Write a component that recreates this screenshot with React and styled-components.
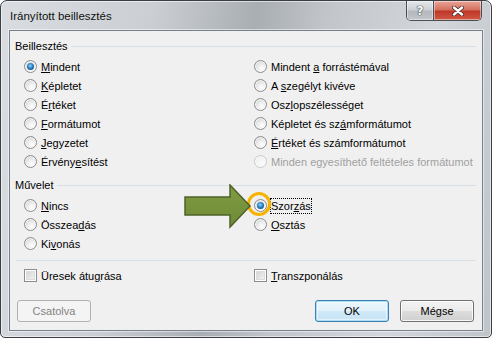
import React from 'react'
import styled, { createGlobalStyle } from 'styled-components'

const GlobalStyle = createGlobalStyle`
  body {
    margin: 0;
    background: #ffffff;
    font-family: "Liberation Sans", Arial, sans-serif;
  }
`

const Window = styled.div`
  width: 492px;
  height: 338px;
  box-sizing: border-box;
  border: 1px solid #3b3f44;
  border-radius: 7px 7px 5px 5px;
  background: linear-gradient(100deg, #d9dde1 0%, #cbcfd3 28%, #a9aeb3 47%, #c2c6ca 60%, #d3d7db 80%, #bfc4c9 100%);
  box-shadow: inset 0 0 0 1px rgba(255, 255, 255, 0.55);
  display: flex;
  flex-direction: column;
  padding: 0 8px 6px 8px;
  overflow: hidden;
`

const TitleBar = styled.div`
  height: 29px;
  display: flex;
  align-items: flex-start;
`

const Title = styled.div`
  margin: 7px 0 0 1px;
  font-size: 11.5px;
  line-height: 16px;
  color: #111;
`

const CaptionButtons = styled.div`
  margin-left: auto;
  margin-right: 1px;
  display: flex;
  height: 19px;
  border: 1px solid #4a4f55;
  border-top: none;
  border-radius: 0 0 5px 5px;
  overflow: hidden;
`

const CaptionButton = styled.div`
  width: ${p => p.$w}px;
  display: flex;
  align-items: center;
  justify-content: center;
  box-shadow: inset 0 0 0 1px rgba(255, 255, 255, 0.45);
  background: ${p => p.$close
    ? 'linear-gradient(#e9a698 0%, #d4715f 45%, #c0372a 55%, #cf5a44 100%)'
    : 'linear-gradient(#e4e7ea 0%, #cdd1d5 45%, #b3b8bd 55%, #c3c7cb 100%)'};
  & + & {
    border-left: 1px solid #4a4f55;
  }
`

const HelpGlyph = styled.span`
  font-family: "DejaVu Sans", sans-serif;
  font-weight: bold;
  font-size: 12px;
  color: #fff;
  text-shadow: 0 0 1px #3c4147, 0 0 1px #3c4147, 0 0 1px #3c4147;
`

const Client = styled.div`
  position: relative;
  flex: 1;
  background: #f0f0f0;
  border: 1px solid #76818d;
  box-shadow: 0 0 0 1px rgba(255, 255, 255, 0.5);
  display: flex;
  flex-direction: column;
  padding: 0 6px 0 5px;
  font-size: 11px;
  color: #000;
`

const GroupHeader = styled.div`
  height: 16px;
  margin-top: ${p => p.$top}px;
  display: flex;
  align-items: center;
  gap: 3px;
  line-height: 16px;
`

const GroupLine = styled.div`
  flex: 1;
  height: 1px;
  background: #d5dfe5;
`

const Separator = styled.div`
  height: 1px;
  margin: 7px 0 0 1px;
  background: #d5dfe5;
`

const OptionGrid = styled.div`
  display: grid;
  grid-template-columns: 230px 1fr;
  grid-template-rows: repeat(${p => p.$rows}, 19px);
  grid-auto-flow: column;
  margin: ${p => p.$top}px 0 0 9px;
`

const Option = styled.label`
  display: flex;
  align-items: center;
  gap: 4px;
  color: ${p => p.$disabled ? '#a0a0a0' : '#000'};
  white-space: nowrap;
`

const Radio = styled.span`
  position: relative;
  width: 13px;
  height: 13px;
  box-sizing: border-box;
  border-radius: 50%;
  border: 1px solid ${p => p.$disabled ? '#c9c9c9' : '#8b8c8d'};
  background: ${p => p.$disabled
    ? 'radial-gradient(circle at 60% 65%, #fafafa 0%, #f1f1f1 60%, #e6e6e6 100%)'
    : 'radial-gradient(circle at 62% 68%, #ffffff 0%, #eaeaea 45%, #cfcfcf 85%, #c4c4c4 100%)'};
  box-shadow: inset 0 0 0 1px rgba(255, 255, 255, 0.7);
  flex: none;

  &::after {
    content: '';
    display: ${p => p.$checked ? 'block' : 'none'};
    position: absolute;
    left: 2px;
    top: 2px;
    width: 7px;
    height: 7px;
    border-radius: 50%;
    background: radial-gradient(circle at 45% 40%, #9fd8f6 0%, #3a94d4 35%, #155a9c 70%, #0d3466 100%);
  }

  &::before {
    content: '';
    display: ${p => p.$ring ? 'block' : 'none'};
    position: absolute;
    left: -8px;
    top: -8px;
    width: 24px;
    height: 24px;
    box-sizing: border-box;
    border-radius: 50%;
    border: 3.5px solid #f6b400;
  }
`

const Checkbox = styled.span`
  width: 13px;
  height: 13px;
  box-sizing: border-box;
  border: 1px solid #8b8c8d;
  background: linear-gradient(135deg, #cbcbcb 0%, #e3e3e3 50%, #f7f7f7 100%);
  box-shadow: inset 0 0 0 1px #ffffff, inset 0 0 0 2px #dcdcdc;
  flex: none;
`

const Text = styled.span`
  line-height: 14px;
  border: 1px dotted ${p => p.$focused ? '#000' : 'transparent'};
  margin: 0 -1px;
  padding: 0;

  u {
    text-decoration: underline;
    text-underline-offset: 1px;
  }
`

const CheckGrid = styled.div`
  display: grid;
  grid-template-columns: 230px 1fr;
  height: 19px;
  margin: 5px 0 0 9px;
`

const ButtonRow = styled.div`
  display: flex;
  gap: 11px;
  margin: 15px 2px 0 2px;
`

const Button = styled.div`
  width: 74px;
  height: 22px;
  box-sizing: border-box;
  border-radius: 3px;
  display: flex;
  align-items: center;
  justify-content: center;
  border: 1px solid ${p => p.$disabled ? '#adb2b5' : p.$default ? '#3c7fb1' : '#707070'};
  color: ${p => p.$disabled ? '#838383' : '#000'};
  background: ${p => p.$disabled
    ? '#f4f4f4'
    : p.$default
      ? 'linear-gradient(#eaf6fd 0%, #e2f1fa 50%, #d1eaf8 50%, #c5e3f5 100%)'
      : 'linear-gradient(#f2f2f2 0%, #ebebeb 50%, #dddddd 50%, #cfcfcf 100%)'};
  box-shadow: ${p => p.$disabled
    ? 'none'
    : p.$default
      ? 'inset 0 0 0 1px #a8dcf7, inset 0 0 0 2px rgba(255,255,255,0.5)'
      : 'inset 0 0 0 1px rgba(255,255,255,0.85)'};
  ${p => p.$first ? 'margin-right: auto;' : ''}
`

const Arrow = styled.svg`
  position: absolute;
  left: 165px;
  top: 153px;
`

const accel = (text) => {
  const i = text.indexOf('&')
  if (i < 0) return text
  return (
    <>
      {text.slice(0, i)}
      <u>{text[i + 1]}</u>
      {text.slice(i + 2)}
    </>
  )
}

const pasteOptions = [
  { text: '&Mindent', checked: true },
  { text: '&Képletet' },
  { text: 'É&rtéket' },
  { text: '&Formátumot' },
  { text: '&Jegyzetet' },
  { text: 'Érvény&esítést' },
  { text: 'Mindent &a forrástémával' },
  { text: 'A &szegélyt kivéve' },
  { text: 'Osz&lopszélességet' },
  { text: 'Képletet és sz&ámformátumot' },
  { text: '&Értéket és számformátumot' },
  { text: 'Minden egyesíthető feltételes formátumot', disabled: true },
]

const opOptions = [
  { text: '&Nincs' },
  { text: 'Összea&dás' },
  { text: 'Ki&vonás' },
  { text: 'Szor&zás', checked: true, focused: true, ring: true },
  { text: '&Osztás' },
  { text: '', empty: true },
]

const RadioOption = ({ opt }) =>
  opt.empty ? <span /> : (
    <Option $disabled={opt.disabled}>
      <Radio $checked={opt.checked} $disabled={opt.disabled} $ring={opt.ring} />
      <Text $focused={opt.focused}>{accel(opt.text)}</Text>
    </Option>
  )

export default function App() {
  return (
    <>
      <GlobalStyle />
      <Window>
        <TitleBar>
          <Title>Irányított beillesztés</Title>
          <CaptionButtons>
            <CaptionButton $w={26}>
              <HelpGlyph>?</HelpGlyph>
            </CaptionButton>
            <CaptionButton $w={47} $close>
              <svg width="12" height="10" viewBox="0 0 12 10">
                <path d="M2 1.5 L10 8.5 M10 1.5 L2 8.5" stroke="#4a2a26" strokeWidth="4" strokeLinecap="round" />
                <path d="M2 1.5 L10 8.5 M10 1.5 L2 8.5" stroke="#ffffff" strokeWidth="2.4" strokeLinecap="round" />
              </svg>
            </CaptionButton>
          </CaptionButtons>
        </TitleBar>
        <Client>
          <GroupHeader $top={7}>
            <span>Beillesztés</span>
            <GroupLine />
          </GroupHeader>
          <OptionGrid $rows={6} $top={3}>
            {pasteOptions.map((o, i) => <RadioOption key={i} opt={o} />)}
          </OptionGrid>
          <GroupHeader $top={6}>
            <span>Művelet</span>
            <GroupLine />
          </GroupHeader>
          <OptionGrid $rows={3} $top={3}>
            {opOptions.map((o, i) => <RadioOption key={i} opt={o} />)}
          </OptionGrid>
          <Separator />
          <CheckGrid>
            <Option>
              <Checkbox />
              <Text>{accel('Üresek átu&grása')}</Text>
            </Option>
            <Option>
              <Checkbox />
              <Text>{accel('&Transzponálás')}</Text>
            </Option>
          </CheckGrid>
          <ButtonRow>
            <Button $disabled $first>Csatolva</Button>
            <Button $default>OK</Button>
            <Button>Mégse</Button>
          </ButtonRow>
          <Arrow width="80" height="48" viewBox="0 0 80 48">
            <defs>
              <linearGradient id="arrowFill" x1="0" y1="0" x2="0" y2="1">
                <stop offset="0" stopColor="#7f9c42" />
                <stop offset="1" stopColor="#6f8b36" />
              </linearGradient>
            </defs>
            <polygon
              points="10,13 55,13 55,1 75,22 55,43 55,31 10,31"
              fill="url(#arrowFill)"
              stroke="#4f6228"
              strokeWidth="1.5"
              strokeLinejoin="miter"
            />
          </Arrow>
        </Client>
      </Window>
    </>
  )
}
